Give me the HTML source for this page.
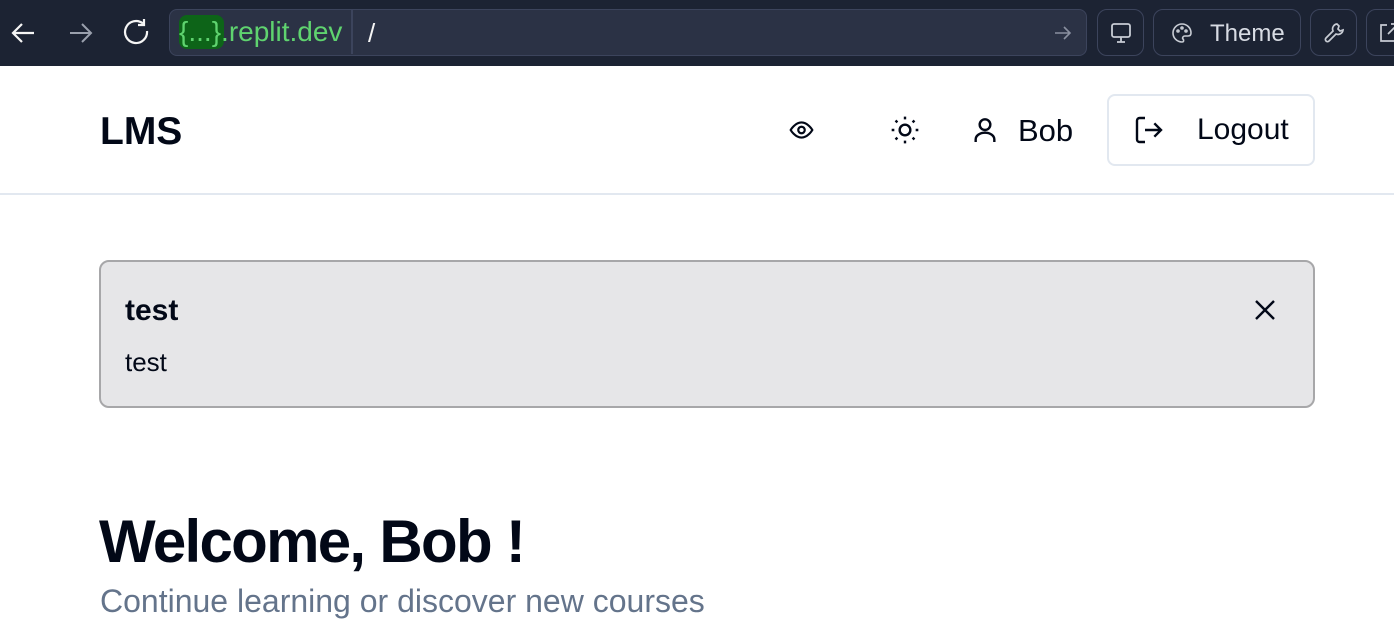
<!DOCTYPE html>
<html><head><style>
*{box-sizing:border-box;margin:0;padding:0}
body{width:1394px;height:600px;overflow:hidden;background:#fff;font-family:"Liberation Sans",sans-serif;position:relative}
.bar{position:absolute;left:0;top:0;width:1394px;height:66px;background:#1c2333}
.url{position:absolute;left:169px;top:9px;width:918px;height:47px;background:#2b3245;border:1.5px solid #3c445c;border-radius:8px}
.btn{position:absolute;top:9px;height:47px;border:1.5px solid #3c445c;border-radius:10px}
.abs{position:absolute}
</style></head><body>
<div class="bar">
<svg class="abs" style="left:10px;top:20px" width="28" height="26" viewBox="0 0 28 26" fill="none" stroke="#f5f5f5" stroke-width="2.2"><path d="M24 13H4M12 4L3 13l9 9"/></svg>
<svg class="abs" style="left:66px;top:20px" width="28" height="26" viewBox="0 0 28 26" fill="none" stroke="#9aa0ad" stroke-width="2"><path d="M4 13h20M16 4l9 9-9 9"/></svg>
<svg class="abs" style="left:121px;top:17px" width="32" height="32" viewBox="0 0 32 32" fill="none" stroke="#f5f5f5" stroke-width="2.2"><path d="M26 14A11 11 0 1 1 22 6.5"/><path d="M23 2v6h-6"/></svg>
<div class="url">
<div class="abs" style="left:9px;top:5px;width:45px;height:34px;background:#0d6418;border-radius:8px"></div>
<div class="abs" style="left:9px;top:6px;font-size:28px;color:#5fd36f;font-family:'Liberation Sans Narrow','Liberation Sans',sans-serif">{...}.replit.dev</div>
<div class="abs" style="left:181px;top:0;width:1.5px;height:44px;background:#3c445c"></div>
<div class="abs" style="left:198px;top:8px;font-size:26px;color:#f5f5f5">/</div>
<svg class="abs" style="left:883px;top:14px" width="20" height="18" viewBox="0 0 20 18" fill="none" stroke="#8a90a0" stroke-width="1.6"><path d="M2 9h15M11 3l6 6-6 6"/></svg>
</div>
<div class="btn" style="left:1097px;width:47px"><svg class="abs" style="left:11px;top:11px" width="24" height="24" viewBox="0 0 24 24" fill="none" stroke="#c8ccd4" stroke-width="1.8"><rect x="3" y="3" width="18" height="13" rx="2"/><path d="M12 16v5M8 21h8"/></svg></div>
<div class="btn" style="left:1153px;width:148px"><svg class="abs" style="left:16px;top:11px" width="24" height="24" viewBox="0 0 24 24" fill="none" stroke="#c8ccd4" stroke-width="1.6"><path d="M12 3a9 9 0 0 0 0 18c2 0 2-2 1-3s0-3 2-3h3c2 0 3-1 3-3 0-5-4-9-9-9z"/><circle cx="8" cy="10" r="1"/><circle cx="12" cy="7" r="1"/><circle cx="16" cy="10" r="1"/></svg><div class="abs" style="left:56px;top:10px;font-size:24px;color:#d8dce4">Theme</div></div>
<div class="btn" style="left:1310px;width:47px"><svg class="abs" style="left:11px;top:11px" width="24" height="24" viewBox="0 0 24 24" fill="none" stroke="#c8ccd4" stroke-width="1.7"><path d="M15 3a5 5 0 0 0-4 7L4 17a2 2 0 0 0 3 3l7-7a5 5 0 0 0 7-4l-3 1-2-2 1-3z"/></svg></div>
<div class="btn" style="left:1366px;width:47px"><svg class="abs" style="left:10px;top:11px" width="24" height="24" viewBox="0 0 24 24" fill="none" stroke="#c8ccd4" stroke-width="1.7"><path d="M10 4H4v16h16v-6M14 3h7v7M21 3l-10 10"/></svg></div>
</div>
<div class="abs" style="left:100px;top:110px;font-size:39px;font-weight:bold;color:#020817">LMS</div>
<svg class="abs" style="left:786px;top:117px" width="31" height="26" viewBox="0 0 24 24" fill="none" stroke="#020817" stroke-width="2"><path d="M2 12s4-7 10-7 10 7 10 7-4 7-10 7S2 12 2 12z"/><circle cx="12" cy="12" r="3"/></svg>
<svg class="abs" style="left:889px;top:114px" width="32" height="32" viewBox="0 0 24 24" fill="none" stroke="#020817" stroke-width="1.8"><circle cx="12" cy="12" r="4"/><path d="M12 2v2M12 20v2M4.9 4.9l1.4 1.4M17.7 17.7l1.4 1.4M2 12h2M20 12h2M4.9 19.1l1.4-1.4M17.7 6.3l1.4-1.4"/></svg>
<svg class="abs" style="left:969px;top:114px" width="32" height="32" viewBox="0 0 24 24" fill="none" stroke="#020817" stroke-width="1.8"><circle cx="12" cy="8" r="4"/><path d="M5 21v-2a7 5 0 0 1 14 0v2"/></svg>
<div class="abs" style="left:1018px;top:113px;font-size:31px;color:#020817">Bob</div>
<div class="abs" style="left:1107px;top:94px;width:208px;height:72px;border:2px solid #e2e8f0;border-radius:8px"></div>
<svg class="abs" style="left:1132px;top:114px" width="34" height="32" viewBox="0 0 24 24" fill="none" stroke="#020817" stroke-width="1.8"><path d="M9 21H5a2 2 0 0 1-2-2V5a2 2 0 0 1 2-2h4M16 17l5-5-5-5M21 12H9"/></svg>
<div class="abs" style="left:1197px;top:113px;font-size:30px;color:#020817">Logout</div>
<div class="abs" style="left:0;top:193px;width:1394px;height:2px;background:#e2e8f0"></div>
<div class="abs" style="left:99px;top:260px;width:1216px;height:148px;background:#e6e6e8;border:2px solid #a7a7a9;border-radius:10px"></div>
<div class="abs" style="left:125px;top:294px;font-size:30px;font-weight:bold;color:#020817">test</div>
<div class="abs" style="left:125px;top:347px;font-size:26px;color:#020817">test</div>
<svg class="abs" style="left:1253px;top:298px" width="24" height="24" viewBox="0 0 24 24" fill="none" stroke="#020817" stroke-width="2.4"><path d="M3 3l18 18M21 3L3 21"/></svg>
<div class="abs" style="left:99px;top:507px;font-size:60px;font-weight:bold;color:#020817;letter-spacing:-1.7px">Welcome, Bob !</div>
<div class="abs" style="left:100px;top:583px;font-size:32px;color:#64748b">Continue learning or discover new courses</div>
</body></html>
